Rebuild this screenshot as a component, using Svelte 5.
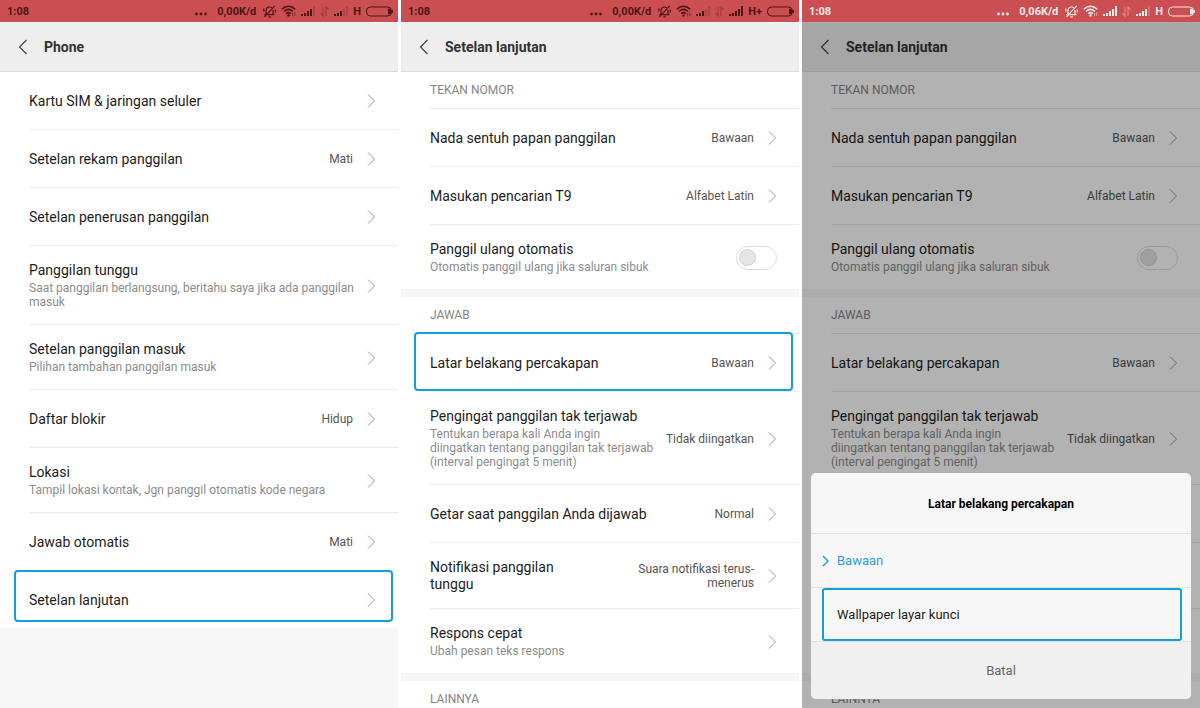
<script>
	let redial = $state([false, false]);
	let background = $state('Bawaan');

	const phoneRows = [
		{ title: 'Kartu SIM & jaringan seluler' },
		{ title: 'Setelan rekam panggilan', value: 'Mati' },
		{ title: 'Setelan penerusan panggilan' },
		{ title: 'Panggilan tunggu', sub: 'Saat panggilan berlangsung, beritahu saya jika ada panggilan masuk' },
		{ title: 'Setelan panggilan masuk', sub: 'Pilihan tambahan panggilan masuk' },
		{ title: 'Daftar blokir', value: 'Hidup' },
		{ title: 'Lokasi', sub: 'Tampil lokasi kontak, Jgn panggil otomatis kode negara' },
		{ title: 'Jawab otomatis', value: 'Mati' },
		{ title: 'Setelan lanjutan', marked: true }
	];

	const advancedSections = [
		{
			name: 'Tekan nomor',
			rows: [
				{ title: 'Nada sentuh papan panggilan', value: 'Bawaan' },
				{ title: 'Masukan pencarian T9', value: 'Alfabet Latin' },
				{ title: 'Panggil ulang otomatis', sub: 'Otomatis panggil ulang jika saluran sibuk', toggle: true }
			]
		},
		{
			name: 'Jawab',
			rows: [
				{ title: 'Latar belakang percakapan', value: 'Bawaan', marked: true },
				{
					title: 'Pengingat panggilan tak terjawab',
					sub: 'Tentukan berapa kali Anda ingin diingatkan tentang panggilan tak terjawab (interval pengingat 5 menit)',
					value: 'Tidak diingatkan'
				},
				{ title: 'Getar saat panggilan Anda dijawab', value: 'Normal' },
				{ title: 'Notifikasi panggilan tunggu', value: 'Suara notifikasi terus-menerus' },
				{ title: 'Respons cepat', sub: 'Ubah pesan teks respons' }
			]
		},
		{ name: 'Lainnya', rows: [] }
	];

	const options = ['Bawaan', 'Wallpaper layar kunci'];
</script>

{#snippet signal(bars)}
	<svg class="icon" width="14" height="11" viewBox="0 0 14 11" fill="currentColor" aria-hidden="true">
		{#each [2, 3, 5, 7, 10] as h, i}
			<rect x={i * 3} y={10 - h} width="2" height={h} opacity={i < bars ? 1 : 0.2} />
		{/each}
	</svg>
{/snippet}

{#snippet statusBar(speed, sim1, sim2, network, light)}
	<div class="status" class:light>
		<span class="clock">1:08</span>
		<svg class="icon dots" width="12" height="11" viewBox="0 0 12 11" fill="currentColor" aria-hidden="true">
			<circle cx="1.5" cy="8" r="1.4" />
			<circle cx="6" cy="8" r="1.4" />
			<circle cx="10.5" cy="8" r="1.4" />
		</svg>
		<span class="speed">{speed}</span>
		<svg class="icon" width="13" height="13" viewBox="0 0 13 13" fill="none" stroke="currentColor" stroke-width="1.2" aria-hidden="true">
			<path d="M3 9.2V5.4C3 3.200 4.400 2 6.500 2c1 0 1.800.3 2.400.8M10 5v4.200M4.600 9.600h6.800M1.200 9.600H2.500M5.400 11.800h2.400M11.800.8 1.500 11.800" />
			<path d="M.8 3.400v3M12.300 4.600v3" />
		</svg>
		<svg class="icon" width="15" height="12" viewBox="0 0 15 12" fill="none" stroke="currentColor" stroke-width="1.6" aria-hidden="true">
			<path d="M.8 4.200c4-3.900 9.400-3.900 13.400 0M3 6.500c2.800-2.600 6.200-2.600 9 0M5.200 8.700c1.500-1.300 3.100-1.300 4.600 0" />
			<circle cx="7.500" cy="10.400" r="1.200" fill="currentColor" stroke="none" />
			<path d="M11.600 8v3.400M13.800 7.400v3.400" stroke-width="1" opacity=".6" />
		</svg>
		{@render signal(sim1)}
		<svg class="icon" width="9" height="11" viewBox="0 0 9 11" fill="none" stroke="currentColor" stroke-width="1.2" opacity=".35" aria-hidden="true">
			<path d="M3 1v9L.6 7.400M6 10V1l2.400 2.600" />
		</svg>
		{@render signal(sim2)}
		<span class="network">{network}</span>
		<svg class="icon" width="27" height="11" viewBox="0 0 27 11" fill="none" stroke="currentColor" aria-hidden="true">
			<rect x=".5" y="1" width="25" height="9" rx="4" />
			<path d="M22 2.400c2.600 0 3.400 1.400 3.400 3.100S24.600 8.600 22 8.600z" fill="currentColor" stroke="none" />
			<path d="M26.500 4v3" />
		</svg>
	</div>
{/snippet}

{#snippet titleBar(title)}
	<header class="titlebar">
		<button class="back" aria-label="Kembali">
			<svg width="10" height="16" viewBox="0 0 10 16" fill="none" stroke="currentColor" stroke-width="1.2"><path d="M8.500 1 1.500 8l7 7" /></svg>
		</button>
		<h1>{title}</h1>
	</header>
{/snippet}

{#snippet label(row)}
	<span class="label">
		<span class="title">{row.title}</span>
		{#if row.sub}<span class="sub">{row.sub}</span>{/if}
	</span>
{/snippet}

{#snippet settingRow(row, marked)}
	<li>
		<button class="row" class:marked>
			{@render label(row)}
			{#if row.value}<span class="value">{row.value}</span>{/if}
			<svg class="chevron" width="9" height="16" viewBox="0 0 9 16" fill="none" stroke="currentColor"><path d="M1 1.500 7.500 8 1 14.500" /></svg>
		</button>
	</li>
{/snippet}

{#snippet advanced(idx, marks)}
	{#each advancedSections as section}
		<section class="group">
			<h2>{section.name}</h2>
			<ul>
				{#each section.rows as row}
					{#if row.toggle}
						<li>
							<label class="row">
								{@render label(row)}
								<input class="switch" type="checkbox" bind:checked={redial[idx]} />
							</label>
						</li>
					{:else}
						{@render settingRow(row, marks && row.marked)}
					{/if}
				{/each}
			</ul>
		</section>
	{/each}
{/snippet}

<main class="screens">
	<div class="phone">
		{@render statusBar('0,00K/d', 4, 3, 'H', false)}
		{@render titleBar('Phone')}
		<div class="group overview">
			<ul>
				{#each phoneRows as row}
					{@render settingRow(row, row.marked)}
				{/each}
			</ul>
		</div>
	</div>

	<div class="phone">
		{@render statusBar('0,00K/d', 3, 5, 'H+', false)}
		{@render titleBar('Setelan lanjutan')}
		{@render advanced(0, true)}
	</div>

	<div class="phone">
		{@render statusBar('0,06K/d', 5, 4, 'H', true)}
		<div class="body">
			{@render titleBar('Setelan lanjutan')}
			{@render advanced(1, false)}
			<div class="backdrop">
				<div class="dialog" role="dialog" aria-labelledby="dialog-title">
					<h3 id="dialog-title">Latar belakang percakapan</h3>
					{#each options as option, i}
						<label class="option" class:active={background == option} class:marked={i == 1}>
							<input type="radio" name="background" value={option} bind:group={background} />
							<svg class="tick" width="8" height="12" viewBox="0 0 8 12" fill="none" stroke="currentColor" stroke-width="1.5"><path d="M1 1l5 5-5 5" /></svg>
							{option}
						</label>
					{/each}
					<button class="cancel">Batal</button>
				</div>
			</div>
		</div>
	</div>
</main>

<style>
	:global(body) {
		background: #fff;
	}
	.screens {
		display: grid;
		grid-template-columns: repeat(3, 1fr);
		gap: 3px;
		height: 100vh;
		font-family: Roboto, "Liberation Sans", sans-serif;
		color: #1c1c1c;
	}
	.phone {
		display: flex;
		flex-direction: column;
		min-width: 0;
		overflow: hidden;
		background: #f6f6f6;
	}
	button {
		border: none;
		background: none;
		color: inherit;
		font: inherit;
		text-align: left;
		cursor: pointer;
	}
	h1, h2, h3, ul {
		margin: 0;
		padding: 0;
	}
	ul {
		list-style: none;
	}

	/* status bar */
	.status {
		display: flex;
		flex: none;
		align-items: center;
		gap: 5px;
		box-sizing: border-box;
		height: 22px;
		padding: 0 5px 0 7px;
		background: #cb4e52;
		color: #4d1416;
		font-size: 11px;
		font-weight: 700;
	}
	.status.light {
		color: #ffe9e9;
	}
	.clock {
		flex: 1;
	}
	.speed {
		margin: 0 2px 0 5px;
	}
	.icon {
		flex: none;
	}

	/* title bar */
	.titlebar {
		display: flex;
		flex: none;
		align-items: center;
		gap: 8px;
		box-sizing: border-box;
		height: 50px;
		padding: 0 10px;
		background: #eee;
		border-top: 1px solid #f8f8f8;
		border-bottom: 1px solid #dcdcdc;
	}
	.back {
		display: flex;
		padding: 8px;
		color: #444;
	}
	h1 {
		font-size: 14px;
		font-weight: 700;
		color: #333;
	}

	/* lists */
	.group {
		flex: none;
		margin-bottom: 8px;
		background: #fff;
	}
	h2 {
		box-sizing: border-box;
		height: 37px;
		margin-left: 29px;
		border-bottom: 1px solid #e8e8e8;
		font-size: 12px;
		font-weight: 400;
		line-height: 37px;
		color: #858585;
		text-transform: uppercase;
	}
	li {
		margin-left: 29px;
		border-bottom: 1px solid #ebebeb;
	}
	li:last-child {
		border-bottom: none;
	}
	.row {
		position: relative;
		display: flex;
		align-items: center;
		gap: 8px;
		box-sizing: border-box;
		width: 100%;
		min-height: 57px;
		padding: 16px 22px 15px 0;
	}
	.label {
		display: flex;
		flex: 1;
		flex-direction: column;
		gap: 2px;
		min-width: 0;
	}
	.title {
		font-size: 14px;
		line-height: 17px;
	}
	.sub {
		font-size: 12px;
		line-height: 14px;
		color: #8c8c8c;
	}
	.value {
		max-width: 150px;
		margin-right: 6px;
		font-size: 12px;
		line-height: 14px;
		color: #555;
		text-align: right;
	}
	.chevron {
		flex: none;
		color: #999;
	}
	.row.marked::after {
		content: "";
		position: absolute;
		inset: -2px 6px 0 -16px;
		border: 2px solid #129fe0;
		border-radius: 4px;
	}
	.overview .row.marked::after {
		inset: -1px 5px 6px -15px;
	}
	.switch {
		flex: none;
		appearance: none;
		display: flex;
		align-items: center;
		box-sizing: border-box;
		width: 41px;
		height: 24px;
		margin: 0;
		padding: 0 2px;
		border: 1px solid #ddd;
		border-radius: 12px;
		background: #fff;
	}
	.switch::before {
		content: "";
		box-sizing: border-box;
		width: 17px;
		height: 17px;
		border: 1px solid #d2d2d2;
		border-radius: 50%;
		background: #e6e6e6;
	}
	.switch:checked {
		justify-content: flex-end;
		background: #129fe0;
	}

	/* dialog */
	.body {
		position: relative;
		display: flex;
		flex: 1;
		flex-direction: column;
		min-height: 0;
		overflow: hidden;
		background: #f6f6f6;
	}
	.backdrop {
		position: absolute;
		inset: 0;
		display: flex;
		align-items: flex-end;
		padding: 9px;
		background: rgba(0, 0, 0, 0.3);
	}
	.dialog {
		display: flex;
		flex: 1;
		flex-direction: column;
		overflow: hidden;
		border-radius: 5px;
		background: #f7f7f7;
	}
	h3 {
		padding-top: 2px;
		border-bottom: 1px solid #e2e2e2;
		font-size: 12px;
		font-weight: 700;
		line-height: 58px;
		color: #000;
		text-align: center;
	}
	.option {
		position: relative;
		display: flex;
		align-items: center;
		gap: 7px;
		height: 53px;
		padding: 0 11px;
		border-bottom: 1px solid #e2e2e2;
		font-size: 13px;
		cursor: pointer;
	}
	.option input {
		position: absolute;
		opacity: 0;
	}
	.tick {
		visibility: hidden;
	}
	.option.active {
		color: #2c9fe6;
	}
	.option.active .tick {
		visibility: visible;
	}
	.option.marked::after {
		content: "";
		position: absolute;
		inset: 0 9px 0 11px;
		border: 2px solid #129fe0;
		border-radius: 3px;
	}
	.cancel {
		padding: 0;
		background: #f0f0f0;
		font-size: 13px;
		line-height: 57px;
		color: #666;
		text-align: center;
	}
</style>
